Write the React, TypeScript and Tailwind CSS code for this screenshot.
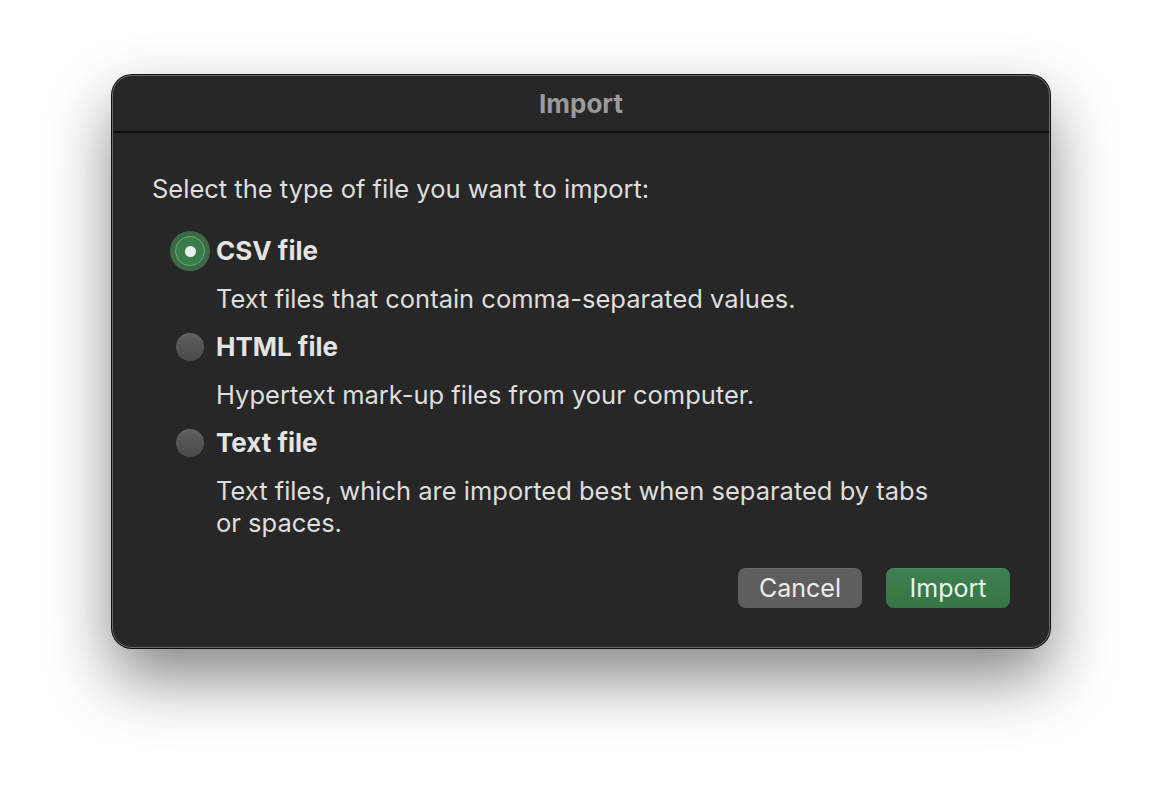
import * as React from "react";

const options = [
  {
    id: "csv",
    title: "CSV file",
    desc: ["Text files that contain comma-separated values."],
  },
  {
    id: "html",
    title: "HTML file",
    desc: ["Hypertext mark-up files from your computer."],
  },
  {
    id: "text",
    title: "Text file",
    desc: ["Text files, which are imported best when separated by tabs", "or spaces."],
  },
];

function Radio({ checked }: { checked: boolean }) {
  if (checked) {
    return (
      <span className="flex h-[40px] w-[40px] items-center justify-center rounded-full bg-[#3c6a46]">
        <span className="flex h-[30px] w-[30px] items-center justify-center rounded-full border border-[#67ad77] bg-[#3a7c4a]">
          <span className="h-[11px] w-[11px] rounded-full bg-[#e9f1ea]" />
        </span>
      </span>
    );
  }
  return (
    <span className="flex h-[40px] w-[40px] items-center justify-center">
      <span className="h-[28px] w-[28px] rounded-full bg-gradient-to-b from-[#5e5e5e] to-[#4a4a4a] shadow-[inset_0_1px_0_rgba(255,255,255,0.08)]" />
    </span>
  );
}

export default function App() {
  const [selected, setSelected] = React.useState("csv");

  return (
    <div
      className="flex h-[796px] w-[1162px] items-start bg-white pl-[112px] pt-[75px]"
      style={{ fontFamily: "Inter, 'Noto Sans', sans-serif" }}
    >
      <div className="flex h-[573px] w-[938px] flex-col overflow-hidden rounded-[20px] border border-[#6b6b6b] bg-[#272727] shadow-[0_0_0_1px_#111,0_30px_64px_rgba(0,0,0,0.48)]">
        {/* title bar */}
        <div className="flex h-[57px] shrink-0 items-center justify-center border-b-2 border-[#0f0f0f]">
          <span className="text-[26px] font-bold leading-[32px] text-[#9b9b9b]">Import</span>
        </div>

        <div className="flex flex-1 flex-col pl-[39px] pr-[39px] pt-[40px]">
          <p className="text-[25.5px] leading-[32px] text-[#dedede]">
            Select the type of file you want to import:
          </p>

          <div className="mt-[26px] flex flex-col gap-[12px]">
            {options.map((opt) => (
              <div key={opt.id} className="flex flex-col gap-[12px]">
                <button
                  className="flex h-[40px] items-center gap-[6px] pl-[18px] text-left"
                  onClick={() => setSelected(opt.id)}
                >
                  <Radio checked={selected === opt.id} />
                  <span className="text-[26px] font-bold leading-[32px] text-[#e4e4e4]">{opt.title}</span>
                </button>
                <div className="pl-[64px] text-[25.5px] leading-[32px] text-[#dedede]">
                  {opt.desc.map((line) => (
                    <div key={line}>{line}</div>
                  ))}
                </div>
              </div>
            ))}
          </div>

          <div className="mt-[29px] flex justify-end gap-[24px]">
            <button className="h-[40px] w-[124px] rounded-[8px] bg-[#5e5e5e] text-[25px] leading-[32px] text-[#ececec] shadow-[inset_0_1px_0_rgba(255,255,255,0.08)]">
              Cancel
            </button>
            <button className="h-[40px] w-[124px] rounded-[8px] bg-gradient-to-b from-[#3e8150] to-[#367545] text-[25px] leading-[32px] text-[#ecf3ee] shadow-[inset_0_1px_0_rgba(255,255,255,0.08)]">
              Import
            </button>
          </div>
        </div>
      </div>
    </div>
  );
}
